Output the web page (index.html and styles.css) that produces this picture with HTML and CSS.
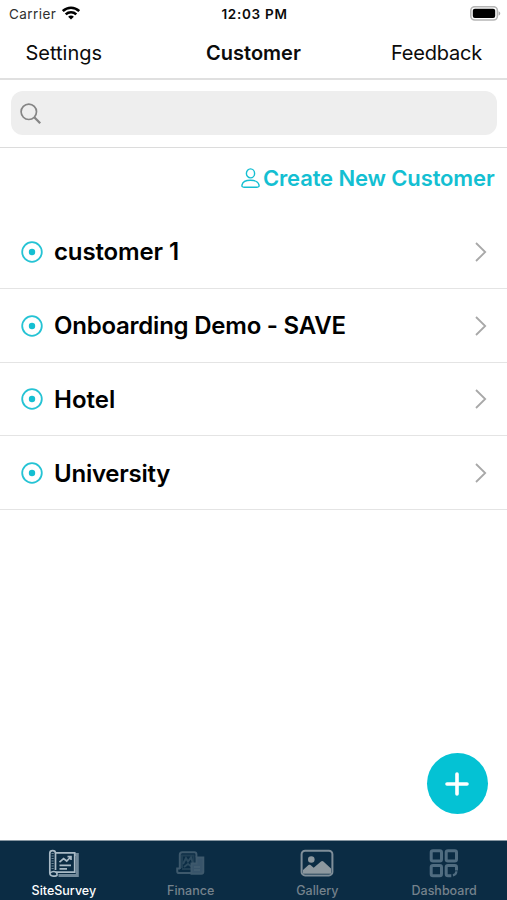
FILE: index.html
```html
<!DOCTYPE html>
<html lang="en">
<head>
<meta charset="utf-8">
<title>Customer</title>
<link rel="stylesheet" href="styles.css">
</head>
<body>
<div class="app">
  <div class="status">
    <div class="carrier"><span>Carrier</span>
      <svg class="wifi" width="18" height="14" viewBox="0 0 18 14" fill="none" stroke="#000" stroke-width="2.6"><path d="M.8 5.1C5.6.7 12.4.7 17.2 5.1"/><path d="M3.7 8.4c3-2.8 7.6-2.8 10.6 0"/><path d="M9 13.6 6.1 10.7c1.6-1.5 4.2-1.5 5.8 0z" fill="#000" stroke="none"/></svg>
    </div>
    <div class="time">12:03 PM</div>
    <svg class="battery" width="31" height="15" viewBox="0 0 31 15"><rect x=".8" y=".7" width="26.6" height="13.3" rx="4" fill="#fff" stroke="#b5b5b5" stroke-width="1.6"/><rect x="2.8" y="2.7" width="22.4" height="9.3" rx="2" fill="#000"/><path d="M28.6 5.2c2.2.8 2.2 3.5 0 4.3z" fill="#aaa"/></svg>
  </div>
  <header class="nav">
    <a class="settings">Settings</a>
    <h1>Customer</h1>
    <a class="feedback">Feedback</a>
  </header>
  <div class="search">
    <div class="field"><svg width="22" height="22" viewBox="0 0 22 22" fill="none" stroke="#858585" stroke-width="1.7"><circle cx="8.8" cy="8.8" r="7.7"/><path d="m14.3 14.3 5.9 5.9" stroke-width="2.3"/></svg></div>
  </div>
  <div class="create">
    <svg width="19" height="21" viewBox="0 0 19 21" fill="none" stroke="#14bfd2" stroke-width="1.4"><ellipse cx="9.5" cy="5.4" rx="4.1" ry="4.5"/><path d="M3 19.2c-1.8 0-2.3-.8-2-2.2.6-2.9 4.3-4.7 8.5-4.7s7.9 1.8 8.5 4.7c.3 1.4-.2 2.2-2 2.2z"/></svg>
    <span>Create New Customer</span>
  </div>
  <main class="list">
    <div class="row"><svg class="dot" viewBox="0 0 22 22"><circle cx="11" cy="11" r="9.8"/><circle class="core" cx="11" cy="11" r="3.2"/></svg><span class="tight">customer 1</span><svg class="chev" viewBox="0 0 12 20"><path d="m1 1 9.2 9L1 19"/></svg></div>
    <div class="row"><svg class="dot" viewBox="0 0 22 22"><circle cx="11" cy="11" r="9.8"/><circle class="core" cx="11" cy="11" r="3.2"/></svg><span class="tighter">Onboarding Demo - SAVE</span><svg class="chev" viewBox="0 0 12 20"><path d="m1 1 9.2 9L1 19"/></svg></div>
    <div class="row"><svg class="dot" viewBox="0 0 22 22"><circle cx="11" cy="11" r="9.8"/><circle class="core" cx="11" cy="11" r="3.2"/></svg><span>Hotel</span><svg class="chev" viewBox="0 0 12 20"><path d="m1 1 9.2 9L1 19"/></svg></div>
    <div class="row"><svg class="dot" viewBox="0 0 22 22"><circle cx="11" cy="11" r="9.8"/><circle class="core" cx="11" cy="11" r="3.2"/></svg><span class="tighter">University</span><svg class="chev" viewBox="0 0 12 20"><path d="m1 1 9.2 9L1 19"/></svg></div>
  </main>
  <button class="fab" aria-label="Add"><svg width="24" height="24" viewBox="0 0 24 24" stroke="#fff" stroke-width="3.6" stroke-linecap="round"><path d="M12 2v20M2 12h20"/></svg></button>
  <nav class="tabs">
    <div class="tab active">
      <svg width="34" height="30" viewBox="-1.5 0 34 30" fill="none" stroke="#a9bac6" stroke-width="1.7"><path d="M27.6 5.6h2.2v21H11" stroke="#71899a" stroke-width="3"/><path d="M8 3.8h19.2v19.4H8.2"/><path d="M8 21V4.2C8 .7 2.3.7 2.3 4.2v19.5c0 4.2 4.8 3.6 6.2 3.2 2-.6 1-3.6-.8-4.2-2-.6-4 .3-5.4 1.4"/><path d="M5.1 4v17" stroke="#6d8596" stroke-width="2.2" stroke-dasharray="1 1.5"/><path d="m12 13.2 4.1-3.6 3.1 2.4 4-4M20 7.6h3.5v3.4M12 16.4h11.5M12 19.8h7.5"/></svg>
      <span>SiteSurvey</span>
    </div>
    <div class="tab">
      <svg width="34" height="30" viewBox="0 0 34 30" fill="none" stroke="#3e596c" stroke-width="2"><path d="M6.8 20V5.8c0-1.7 1-2.5 2.4-2.5h12.2c1.3 0 2 .8 2 2v3"/><path d="M9 19V6.5h11.5V20H9" stroke="#203f54"/><path d="m10 15 3-6 2 3.5 3-4 2 6M11 18l4-3 4 3" stroke="#2c4a5e"/><path d="M7 19.5H4.2v2.4c0 1.4.8 2.2 2.2 2.2h15.1"/><path d="M18.5 14.5h5V8.4h6.8v14.3c0 1.3-.8 2-2 2h-9.8z" fill="#38546a"/><path d="M21 18h6M21 21h6" stroke="#4a6475" stroke-width="1"/></svg>
      <span>Finance</span>
    </div>
    <div class="tab">
      <svg width="34" height="30" viewBox="0 0 34 30"><rect x="1.6" y="1.8" width="30.8" height="24.6" rx="3.5" fill="none" stroke="#7f8e99" stroke-width="2"/><circle cx="11.3" cy="10.5" r="3.3" fill="#8d989f"/><path d="M3 21 8.5 16.1c.7-.6 1.3-.6 2 0l3.2 2.7 7.3-6.2c.8-.7 1.6-.7 2.4 0l7.6 6.8v5.4H3z" fill="#8d989f"/></svg>
      <span>Gallery</span>
    </div>
    <div class="tab">
      <svg width="34" height="30" viewBox="0 0 34 30" fill="none" stroke="#506c80" stroke-width="3"><rect x="4.2" y="1.7" width="10.3" height="10.3" rx="1.8"/><rect x="19.2" y="1.7" width="10.3" height="10.3" rx="1.8"/><rect x="4.2" y="16.4" width="10.3" height="10.3" rx="1.8"/><path d="M29.5 21.5v-3.3c0-1-.8-1.8-1.8-1.8H21c-1 0-1.8.8-1.8 1.8v6.7c0 1 .8 1.8 1.8 1.8h3.3"/><path d="M29.4 22.3c-.1 2.2-1.3 3.6-3.5 4" stroke-width="2.2"/></svg>
      <span>Dashboard</span>
    </div>
  </nav>
</div>
</body>
</html>
```
FILE: styles.css
```css
* { box-sizing: border-box; }
body { margin: 0; background: #fff; font-family: Inter, "Liberation Sans", sans-serif; color: #0b0b0b; }
svg { display: block; flex: none; }
.app { height: 900px; display: flex; flex-direction: column; overflow: hidden; position: relative; }
.status { height: 27px; display: grid; grid-template-columns: 1fr auto 1fr; align-items: center; padding: 0 6px 0 9px; font-size: 13.5px; line-height: 28px; }
.carrier { display: flex; align-items: center; gap: 6px; color: #303030; letter-spacing: .42px; }
.wifi { margin-top: -2px; }
.time { font-weight: 600; letter-spacing: .72px; margin-left: -1px; }
.battery { justify-self: end; margin-top: -1px; }
.nav { height: 53px; border-bottom: 2px solid #e0e0e0; display: grid; grid-template-columns: 1fr auto 1fr; align-items: center; padding: 0 25px; font-size: 20px; line-height: 24px; }
.nav h1 { margin: 0; font-size: 20px; font-weight: 600; line-height: 24px; }
.settings { padding-left: .5px; }
.feedback { justify-self: end; letter-spacing: -.2px; }
.search { height: 68px; padding: 11px 10px 12px 11px; border-bottom: 1px solid #dcdcdc; }
.field { height: 44px; border-radius: 12px; background: #eee; display: flex; align-items: center; padding: 1px 0 0 9px; }
.create { height: 67px; padding: 17px 12.5px 0 0; display: flex; justify-content: flex-end; gap: 3px; color: #14bfd2; font-size: 22px; font-weight: 600; line-height: 27px; letter-spacing: -.13px; }
.create svg { margin-top: 3px; }
.row { height: 73.75px; border-bottom: 1px solid #e4e4e4; display: flex; align-items: center; padding: 1px 20px 0 21px; font-size: 24px; font-weight: 600; color: #000; }
.row span { flex: 1; margin-left: 11px; }
.row .tight { letter-spacing: -.13px; }
.row .tighter { letter-spacing: -.23px; }
.dot { width: 22px; height: 22px; fill: none; stroke: #25c3d4; stroke-width: 1.8; }
.dot .core { fill: #14bfd2; stroke: none; }
.chev { width: 12px; height: 20px; fill: none; stroke: #a8a8a8; stroke-width: 1.8; }
.fab { position: absolute; right: 19.5px; top: 753.3px; width: 61px; height: 61px; border: 0; border-radius: 50%; background: #04c2d4; padding: 0; display: grid; place-items: center; }
.tabs { margin-top: auto; height: 60px; background: #0b2c44; border-top: 1px solid #8796a1; display: grid; grid-template-columns: repeat(4, 1fr); }
.tab { display: flex; flex-direction: column; align-items: center; padding-top: 8px; color: #75828c; font-size: 12.5px; font-weight: 500; line-height: 16px; }
.tab span { margin-top: 4.4px; padding-left: 1px; }
.active { color: #fff; }
```
